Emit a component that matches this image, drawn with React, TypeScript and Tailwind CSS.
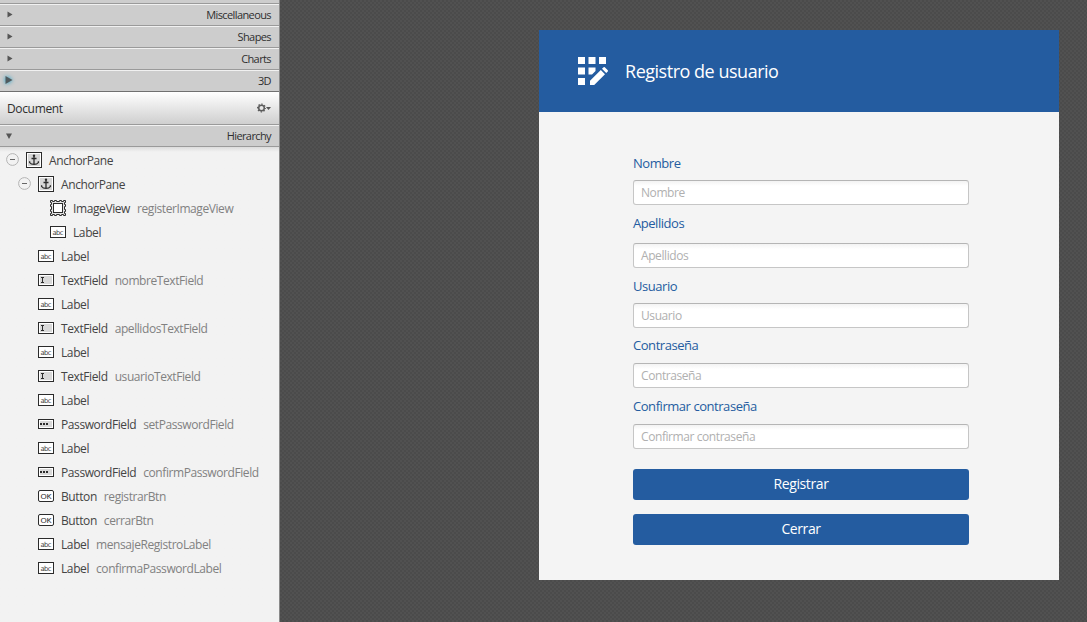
import React from "react";

const sections = ["Miscellaneous", "Shapes", "Charts", "3D"];

type Kind = "anchor" | "image" | "label" | "text" | "password" | "button";
type Node = { depth: number; kind: Kind; name: string; id?: string };

const nodes: Node[] = [
  { depth: 0, kind: "anchor", name: "AnchorPane" },
  { depth: 1, kind: "anchor", name: "AnchorPane" },
  { depth: 2, kind: "image", name: "ImageView", id: "registerImageView" },
  { depth: 2, kind: "label", name: "Label" },
  { depth: 1, kind: "label", name: "Label" },
  { depth: 1, kind: "text", name: "TextField", id: "nombreTextField" },
  { depth: 1, kind: "label", name: "Label" },
  { depth: 1, kind: "text", name: "TextField", id: "apellidosTextField" },
  { depth: 1, kind: "label", name: "Label" },
  { depth: 1, kind: "text", name: "TextField", id: "usuarioTextField" },
  { depth: 1, kind: "label", name: "Label" },
  { depth: 1, kind: "password", name: "PasswordField", id: "setPasswordField" },
  { depth: 1, kind: "label", name: "Label" },
  { depth: 1, kind: "password", name: "PasswordField", id: "confirmPasswordField" },
  { depth: 1, kind: "button", name: "Button", id: "registrarBtn" },
  { depth: 1, kind: "button", name: "Button", id: "cerrarBtn" },
  { depth: 1, kind: "label", name: "Label", id: "mensajeRegistroLabel" },
  { depth: 1, kind: "label", name: "Label", id: "confirmaPasswordLabel" },
];

const indent = ["pl-[6px]", "pl-[18px]", "pl-[30px]"];

function KindIcon({ kind }: { kind: Kind }) {
  return (
    <svg width="16" height="16" viewBox="0 0 16 16" className="shrink-0" fill="none">
      {kind === "anchor" && (
        <>
          <rect x="0.5" y="0.5" width="15" height="15" fill="#fff" stroke="#2b2b2b" />
          <rect x="2" y="2" width="12" height="12" fill="#d6d6d6" />
          <path d="M8 4.500V12M5.500 6.500h5M3.600 9.200v1.300c1 1.500 2.500 1.900 4.400 1.900s3.400-.4 4.400-1.900V9.200" stroke="#2b2b2b" strokeWidth="1.3" />
          <circle cx="8" cy="3.8" r="1.2" fill="#2b2b2b" />
        </>
      )}
      {kind === "image" && (
        <>
          <path
            d="M.5.5h2v1h2v-1h2v1h3v-1h2v1h2v-1h2v2h-1v2h1v2h-1v3h1v2h-1v2h1v2h-2v-1h-2v1h-2v-1h-3v1h-2v-1h-2v1h-2v-2h1v-2h-1v-2h1v-3h-1v-2h1v-2h-1z"
            fill="#e2e2e2"
            stroke="#2b2b2b"
          />
          <rect x="3.5" y="3.5" width="9" height="9" fill="#fff" stroke="#2b2b2b" />
        </>
      )}
      {kind === "label" && (
        <>
          <rect x="0.5" y="2.5" width="15" height="11" fill="#fff" stroke="#2b2b2b" />
          <text x="8" y="10.6" textAnchor="middle" fontSize="6.8" textLength="11" fill="#444" fontFamily="'DejaVu Sans', sans-serif">abc</text>
        </>
      )}
      {kind === "text" && (
        <>
          <rect x="0.5" y="2.5" width="15" height="11" fill="#fff" stroke="#2b2b2b" />
          <rect x="2" y="4" width="12" height="8" fill="#d9d9d9" />
          <path d="M3 5.500h3M3 10.500h3M4.500 5v6" stroke="#2b2b2b" />
        </>
      )}
      {kind === "password" && (
        <>
          <rect x="0.5" y="3.5" width="15" height="9" fill="#fff" stroke="#2b2b2b" />
          <rect x="2" y="5" width="12" height="6" fill="#d9d9d9" />
          <path d="M2 7h2v2H2zM5 7h2v2H5zM8 7h2v2H8z" fill="#2b2b2b" />
        </>
      )}
      {kind === "button" && (
        <>
          <rect x="0.5" y="2.5" width="15" height="11" rx="1.5" fill="#fff" stroke="#2b2b2b" />
          <text x="8" y="11" textAnchor="middle" fontSize="8" textLength="11" fill="#2b2b2b" stroke="#2b2b2b" strokeWidth=".1" fontFamily="'Open Sans', sans-serif">OK</text>
        </>
      )}
    </svg>
  );
}

function SectionHeader({ title, state }: { title: string; state: "closed" | "focused" | "open" }) {
  return (
    <div className="flex h-[22px] shrink-0 items-center justify-between border-b border-[#9a9a9a] bg-[#cdcdcd] pl-[6px] pr-[8px] shadow-[inset_0_1px_0_#f1f1f1]">
      <svg width="10" height="12" viewBox="0 0 10 12" className="overflow-visible">
        {state === "closed" && <path d="M1.500 2.500v6L6.500 5.500z" fill="#555" />}
        {state === "focused" && (
          <path d="M-.5 1v8L6.500 5z" fill="#4f5a5e" className="drop-shadow-[0_0_2px_#0896c4]" />
        )}
        {state === "open" && <path d="M0 3.500h6L3 9z" fill="#555" />}
      </svg>
      <span className="text-[11px] leading-[20px] tracking-[-0.6px] text-[#2f2f2f]">{title}</span>
    </div>
  );
}

function TreeRow({ node }: { node: Node }) {
  return (
    <div className={`flex h-6 items-center ${indent[node.depth]}`}>
      <span className="flex w-5 shrink-0">
        {node.kind === "anchor" && (
          <svg width="13" height="13" viewBox="0 0 13 13" fill="none" className="-mt-[1px]">
            <circle cx="6.5" cy="6.5" r="5.9" stroke="#b4b4b4" />
            <path d="M4 6.500h5" stroke="#666" />
          </svg>
        )}
      </span>
      <KindIcon kind={node.kind} />
      <span className="ml-[7px] pt-[2px] text-[12px] leading-[22px] tracking-[-0.4px] text-[#444]">{node.name}</span>
      {node.id && (
        <span className="ml-[7px] pt-[2px] text-[12px] leading-[22px] tracking-[-0.42px] text-[#818181]">{node.id}</span>
      )}
    </div>
  );
}

function Field({ label, gap, inner }: { label: string; gap: string; inner: string }) {
  return (
    <div className={gap}>
      <div className={`h-[18px] text-[13px] leading-[18px] tracking-[-0.45px] text-[#245ca0] ${inner}`}>{label}</div>
      <div className="flex h-[25px] items-center rounded-[3px] border border-[#c6c6c6] border-t-[#b5b5b5] bg-gradient-to-b from-[#f3f3f3] to-white to-[5px] pl-[7px] text-[12px] tracking-[-0.42px] text-[#b0b0b0]">
        {label}
      </div>
    </div>
  );
}

export default function App() {
  return (
    <div className="flex h-[622px] w-[1087px] overflow-hidden bg-[#4d4d4d] font-['Open_Sans','Noto_Sans',sans-serif]">
      <aside className="flex w-[280px] shrink-0 flex-col border-r border-[#8a8a8a] bg-[#f2f2f2]">
        <div className="h-[4px] shrink-0 border-b border-[#9a9a9a] bg-[#cdcdcd]" />
        {sections.map((s) => (
          <SectionHeader key={s} title={s} state={s === "3D" ? "focused" : "closed"} />
        ))}
        <div className="flex h-[33px] shrink-0 items-center justify-between border-b border-[#9a9a9a] bg-gradient-to-b from-white to-[#cfcfcf] pl-[7px] pr-[8px] shadow-[0_-1px_0_#707070]">
          <span className="pt-[2px] text-[12px] tracking-[-0.35px] text-[#2f2f2f]">Document</span>
          <svg width="14" height="10" viewBox="0 0 14 10" fill="none">
            <circle cx="4.5" cy="5" r="2.8" stroke="#5c5c5c" strokeWidth="1.5" />
            <circle cx="4.5" cy="5" r="3.9" stroke="#5c5c5c" strokeWidth="1.2" strokeDasharray="1.5 1.563" strokeDashoffset=".7" />
            <path d="M9 4h5l-2.500 3z" fill="#555" />
          </svg>
        </div>
        <SectionHeader title="Hierarchy" state="open" />
        <div className="flex grow flex-col bg-gradient-to-b from-[#dcdcdc] to-[#f2f2f2] to-[5px] pt-[1px]">
          {nodes.map((n, i) => (
            <TreeRow key={i} node={n} />
          ))}
        </div>
      </aside>
      <main className="grow bg-[repeating-conic-gradient(#4b4b4b_0_25%,#515151_0_50%)] bg-[length:4px_4px] pl-[259px] pt-[30px]">
        <div className="flex h-[550px] w-[520px] flex-col bg-[#f4f4f4]">
          <header className="flex h-[82px] shrink-0 items-center bg-[#245ca0] pl-[39px]">
            <svg width="31" height="29" viewBox="0 0 31 29" fill="#fff">
              <path d="M0 0h7v7H0zM10.500 0h7v7h-7zM21 0h7v7h-7zM0 10.500h7v7H0zM0 21h7v7H0zM10.500 10.500h7v3.500l-3.500 3.500h-3.500z" />
              <path d="M12 28v-4.200L22.800 13l4.200 4.200L16.200 28zM24 11.800l1.600-1.500q.6-.4 1.200 0l3 3q.4.600 0 1.200L28.200 16z" />
            </svg>
            <h1 className="ml-[16px] text-[18px] tracking-[-0.48px] text-white">Registro de usuario</h1>
          </header>
          <div className="ml-[94px] flex w-[336px] flex-col">
            <Field label="Nombre" gap="mt-[42px]" inner="mb-[8px]" />
            <Field label="Apellidos" gap="mt-[9px]" inner="mb-[11px]" />
            <Field label="Usuario" gap="mt-[9px]" inner="mb-[8px]" />
            <Field label="Contraseña" gap="mt-[8px]" inner="mb-[9px]" />
            <Field label="Confirmar contraseña" gap="mt-[9px]" inner="mb-[9px]" />
            <button className="mt-[20px] h-[31px] rounded-[3px] bg-[#245ca0] pb-[2px] text-[14px] tracking-[-0.4px] text-white">Registrar</button>
            <button className="mt-[14px] h-[31px] rounded-[3px] bg-[#245ca0] pb-[2px] text-[14px] tracking-[-0.4px] text-white">Cerrar</button>
          </div>
        </div>
      </main>
    </div>
  );
}
